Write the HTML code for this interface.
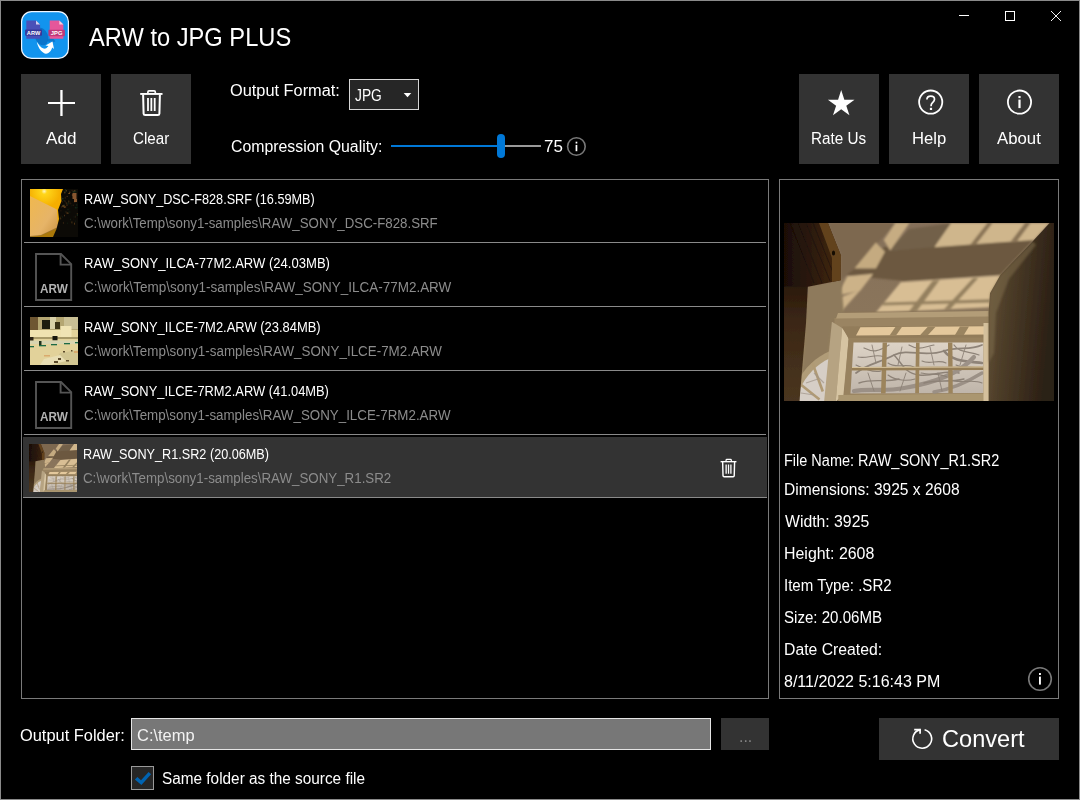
<!DOCTYPE html>
<html lang="en">
<head>
<meta charset="utf-8">
<title>ARW to JPG PLUS</title>
<style>
*{box-sizing:border-box;margin:0;padding:0}
html,body{width:1080px;height:800px;overflow:hidden;background:#000}
body{position:relative;font-family:"Liberation Sans",sans-serif;color:#fff}
#win{position:absolute;left:0;top:0;width:1080px;height:800px;border:1px solid #8a8a8a;background:#000}
.a{position:absolute}
.t{position:absolute;white-space:nowrap;line-height:1;color:#fff;transform-origin:0 0}
.btn{position:absolute;background:#333;width:80px;height:90px;top:74px}
.sep{position:absolute;left:24px;width:742px;height:1px;background:#8a8a8a}
svg{position:absolute;overflow:visible}
</style>
</head>
<body>
<div id="win"></div>

<svg width="0" height="0" style="left:0;top:0">
 <defs>
  <g id="trash" fill="none" stroke="#fff">
   <rect x="2.2" y="5" width="22.3" height="1.9" fill="#fff" stroke="none"/>
   <path d="M9.9 5 V3.9 Q9.9 2.8 11 2.8 H16.2 Q17.3 2.8 17.3 3.9 V5" stroke-width="1.7"/>
   <path d="M5.1 6.5 L5.6 25.6 Q5.7 27.1 7.2 27.1 H19.8 Q21.3 27.1 21.4 25.6 L21.9 6.5" stroke-width="2"/>
   <path d="M10 10 V23.1 M13.35 10 V23.1 M16.7 10 V23.1" stroke-width="1.8"/>
  </g>
  <g id="fileico">
   <path d="M1 1 H26 L36.2 11.2 V47 H1 Z" fill="none" stroke="#555" stroke-width="1.9"/>
   <path d="M25.6 1 V11.6 H36.2" fill="none" stroke="#555" stroke-width="1.9"/>
  </g>
  <linearGradient id="gCeil" x1="0" y1="0" x2="0" y2="1"><stop offset="0" stop-color="#85705a"/><stop offset="1" stop-color="#8f7a5c"/></linearGradient>
  <linearGradient id="gWallR" x1="0" y1="0" x2="1" y2="0.25"><stop offset="0" stop-color="#66543a"/><stop offset="0.35" stop-color="#4e3e29"/><stop offset="1" stop-color="#2c2015"/></linearGradient>
  <linearGradient id="gBeam" x1="0" y1="0" x2="1" y2="0"><stop offset="0" stop-color="#1a0e06"/><stop offset="0.55" stop-color="#2e1b0c"/><stop offset="1" stop-color="#452a13"/></linearGradient>
  <linearGradient id="gCol" x1="0" y1="0" x2="0" y2="1"><stop offset="0" stop-color="#2a190c"/><stop offset="0.3" stop-color="#3a2614"/><stop offset="1" stop-color="#4a3620"/></linearGradient>
  <linearGradient id="gGlass" x1="0" y1="0" x2="0" y2="1"><stop offset="0" stop-color="#ddd3c6"/><stop offset="1" stop-color="#bfb5aa"/></linearGradient>
  <linearGradient id="gCove" x1="0" y1="0" x2="0" y2="1"><stop offset="0" stop-color="#8a7456"/><stop offset="0.6" stop-color="#a38d6b"/><stop offset="1" stop-color="#8c7758"/></linearGradient>
  <filter id="fb" x="-5%" y="-5%" width="110%" height="110%"><feGaussianBlur stdDeviation="0.9"/></filter>
  <filter id="fb2" x="-5%" y="-5%" width="110%" height="110%"><feGaussianBlur stdDeviation="0.5"/></filter>
  <clipPath id="cpPhoto"><rect x="0" y="0" width="270" height="178"/></clipPath>
  <g id="photo" clip-path="url(#cpPhoto)">
   <rect x="0" y="0" width="270" height="178" fill="url(#gCeil)"/>
   <!-- darker mid shadow on ceiling -->
   <g filter="url(#fb)">
    <polygon points="100,24 250,16 216,52 120,58 60,52 70,46" fill="#6c5840"/>
    <polygon points="125,6 168,0 150,24 104,28" fill="#72604a"/>
    <polygon points="44,0 112,0 70,46 57,57 57,32" fill="#7d6850"/>
    <!-- light patches -->
    <polygon points="111.4,0 125.6,0 106.2,27.4 99.7,17" fill="#c6ac82"/>
    <polygon points="91.9,19.6 101,28.7 91.9,45.6 70.5,45.6" fill="#c4aa80"/>
    <polygon points="63.4,53.3 89.3,50.7 76.4,67.6 53,72.8" fill="#ccb288"/>
    <polygon points="53.3,75.4 77,66.5 56,90 49.8,92" fill="#cdb389"/>
    <polygon points="167.1,0 265.6,0 250.1,17 213.8,19.6 150.3,24.2" fill="#cfb68c"/>
    <polygon points="203.4,0 208.5,0 192,21.5 186,22" fill="#8a7456"/>
    <polygon points="241,0 246.6,0 233.2,18 226.7,18.6" fill="#8a7456"/>
    <!-- lower light grid -->
    <polygon points="116.7,59.2 216.7,52.6 206,84.2 91.7,89.7" fill="#d8be94"/>
    <polygon points="148.6,57.8 155.6,57.2 133.3,87.5 125,88.3" fill="#94805e"/>
    <polygon points="188.9,55.3 194.4,55 166.7,85.8 159.7,86.4" fill="#94805e"/>
    <polygon points="100,79.4 206,76.2 206,79.4 98,82.6" fill="#94805e"/>
   </g>
   <!-- lower wall / cove area -->
   <rect x="15" y="89" width="192" height="90" fill="url(#gCove)" filter="url(#fb)"/>
   <polygon points="24,63.7 57,57.2 60,90 47.9,98.7 40,178 15.5,178 22,100" fill="#8e7a5c" filter="url(#fb)"/>
   <!-- arc window -->
   <g filter="url(#fb2)">
    <path d="M13,160 C20,145 32,134 46,128 L42,178 L13,178 Z" fill="#b09c78"/>
    <path d="M15.5,167 C22,152 33,141 45.5,135.5 L41.5,178 L15.5,178 Z" fill="#d6cec6"/>
    <path d="M28.4,140 L38.8,168.5" stroke="#b09a74" stroke-width="2.6"/>
    <path d="M15.4,160.5 L35.5,176.5" stroke="#b09a74" stroke-width="2.6"/>
    <path d="M17,170 L30,172 M22,160 L34,156 M30,150 L40,160" stroke="#a09488" stroke-width="1.2" opacity="0.7"/>
   </g>
   <!-- window -->
   <g filter="url(#fb2)">
    <polygon points="50.4,95 204.7,93 204.7,103 50.4,104" fill="#9a8462"/>
    <polygon points="54,90 204.7,88 204.7,93.5 52,95.5" fill="#b39d78"/>
    <polygon points="47.9,98.7 58.2,105.1 51.7,178.8 40.1,178.8" fill="#b6a382"/>
    <polygon points="58.2,105.1 64.7,114.9 59.5,171.3 51.7,178.8" fill="#d6c4a2"/>
    <polygon points="58.2,103.5 204.7,102.5 204.7,116 64.7,116" fill="#927c5a"/>
    <polygon points="76.4,104.2 201.5,103.2 201.5,111.6 72,112.6" fill="#e4c89c"/>
    <polygon points="111.4,104 117.9,104 112,112.4 105.5,112.4" fill="#9a8460"/>
    <polygon points="143.8,103.8 151.6,103.8 143.8,112.2 136,112.2" fill="#9a8460"/>
    <polygon points="176,103.5 185,103.5 179.8,112 171,112" fill="#9a8460"/>
    <polygon points="64.7,114.9 204.7,114.4 204.7,178 59.5,178" fill="#98825f"/>
    <polygon points="69.5,119.6 199.5,119.6 199.5,170 66.5,170.6" fill="url(#gGlass)"/>
   </g>
   <!-- branches -->
   <g fill="none" stroke="#877c71" stroke-linecap="round" filter="url(#fb2)" opacity="0.9">
    <path d="M72,150 C85,140 95,140 110,132 C125,125 140,135 160,128 C175,123 185,128 198,122" stroke-width="1.8"/>
    <path d="M110,132 C118,140 120,150 135,152 C150,154 160,146 175,150" stroke-width="1.5"/>
    <path d="M160,128 C168,138 180,138 198,140" stroke-width="2.6"/>
    <path d="M190,134 C176,150 150,160 120,165 C100,169 85,165 70,168" stroke-width="4.2" stroke="#978c82"/>
    <path d="M198,150 C185,158 170,166 150,169" stroke-width="3.4" stroke="#978c82"/>
    <path d="M80,125 C90,130 95,128 105,122 M125,122 C135,128 140,124 150,122 M170,122 C175,130 185,128 195,132" stroke-width="1.2"/>
    <path d="M75,160 C90,155 100,160 115,156 M140,160 C155,156 165,160 180,156" stroke-width="1.4"/>
    <path d="M74,134 C84,136 92,130 100,134 M104,140 C112,146 122,140 130,144 M138,138 C146,142 154,136 162,140 M172,142 C180,146 188,142 197,146" stroke-width="1.1"/>
    <path d="M72,142 C80,146 90,150 97,148 M104,152 C112,158 124,158 131,156 M137,150 C146,152 156,150 163,154 M170,158 C180,160 190,156 198,160" stroke-width="1.1"/>
    <path d="M88,122 L92,140 M118,124 L114,142 M146,124 L150,142 M182,122 L176,142 M84,150 L90,168 M122,150 L116,168 M154,150 L158,168" stroke-width="0.9"/>
   </g>
   <!-- muntins & frame -->
   <g filter="url(#fb2)">
    <polygon points="98.6,119.6 103,119.6 101.6,170.4 97,170.4" fill="#9c845c"/>
    <polygon points="132,119.6 135.6,119.6 135,170.3 131.2,170.3" fill="#9c845c"/>
    <polygon points="164,119.6 168.4,119.6 168.8,170.2 164.4,170.2" fill="#9c845c"/>
    <polygon points="68,144 199.5,143.4 199.5,147 67.6,147.6" fill="#967e56"/>
    <polygon points="68,144 199.5,143.4 199.5,144.4 68,145" fill="#d8c49c"/>
    <polygon points="54.3,171.9 204.7,170.4 204.7,178.8 54.3,178.8" fill="#aa9670"/>
    <polygon points="199.5,100 204.7,100 204.7,178 199.5,178" fill="#d4c09c"/>
   </g>
   <!-- right wall -->
   <polygon points="265.6,0 270,0 270,178 204.7,178 204.7,89 206,70.2 216.4,52 248.8,18.3" fill="url(#gWallR)" filter="url(#fb2)"/>
   <polygon points="216.4,52 248.8,18.3 252,22 225,56 212,90 210,130 204.7,140 204.7,89 206,70.2" fill="#7e6c4c" opacity="0.55" filter="url(#fb)"/>
   <!-- left column and beam -->
   <g filter="url(#fb2)">
    <polygon points="0,60 24,60 22,100 15.5,178 0,178" fill="url(#gCol)"/>
    <polygon points="0,0 44,0 57,32.6 56.7,57.2 24,63.7 0,63.7" fill="url(#gBeam)"/>
    <path d="M6,0 L30,60 M14,0 L38,60 M22,0 L46,58 M29,0 L50,52" stroke="#120904" stroke-width="0.8" opacity="0.5" fill="none"/>
    <polygon points="35,0 44,0 57,32.6 56.7,57.2 48,59 48,35" fill="#62431f"/>
    <ellipse cx="49.5" cy="30" rx="1.6" ry="2.6" fill="#140a04"/>
   </g>
  </g>

 </defs>
</svg>


<!-- window controls -->
<svg style="left:0;top:0" width="1080" height="40" viewBox="0 0 1080 40">
 <rect x="959" y="15" width="10" height="1" fill="#fff"/>
 <rect x="1005.5" y="11.5" width="9" height="9" fill="none" stroke="#fff" stroke-width="1"/>
 <path d="M1051 11 L1061 21 M1061 11 L1051 21" stroke="#fff" stroke-width="0.95" fill="none"/>
</svg>

<svg id="appicon" style="left:21px;top:11px" width="48" height="48" viewBox="0 0 48 48">
 <rect x="0.6" y="0.6" width="46.8" height="46.8" rx="10" ry="10" fill="#1294ee" stroke="#f0f6ff" stroke-width="1.2"/>
 <ellipse cx="20.5" cy="25.5" rx="6.5" ry="9" fill="#0a6fc4" opacity="0.85" transform="rotate(-20 20.5 25.5)"/>
 <path d="M27 30 Q31 27 33 31" stroke="#0a6fc4" stroke-width="3" fill="none" opacity="0.8"/>
 <!-- arw file -->
 <path d="M5.3 9.4 H15 L19.1 13.5 V27.8 H5.3 Z" fill="#4a50b8"/>
 <path d="M15 9.4 L19.1 13.5 H15 Z" fill="#d6d0f0"/>
 <rect x="4.1" y="18.4" width="16.9" height="6.4" rx="0.8" fill="#37379a"/>
 <text x="12.55" y="23.5" font-family="Liberation Sans, sans-serif" font-weight="700" font-size="5.4" fill="#fff" text-anchor="middle" textLength="13.4" lengthAdjust="spacingAndGlyphs">ARW</text>
 <!-- jpg file -->
 <path d="M28.7 9.4 H38.3 L42.4 13.5 V27.8 H28.7 Z" fill="#e6569a"/>
 <path d="M38.3 9.4 L42.4 13.5 H38.3 Z" fill="#f6d0e2"/>
 <rect x="27.4" y="18.8" width="16.5" height="6.4" rx="0.8" fill="#c0387a"/>
 <text x="35.65" y="23.9" font-family="Liberation Sans, sans-serif" font-weight="700" font-size="5.4" fill="#fff" text-anchor="middle" textLength="11.6" lengthAdjust="spacingAndGlyphs">JPG</text>
 <!-- arrow -->
 <path d="M15.8 30.8 C17 38 22.5 43 25 42.8 C28.5 42.5 30.5 39 31.2 36.5 L33 38 L31.5 30.5 L24.5 34.5 L27.5 35 C26 37 24.5 38 22.5 37.5 C19.5 36.8 17.5 33.5 15.8 30.8 Z" fill="#fff"/>
</svg>


<!-- toolbar buttons -->
<div class="btn" style="left:21px"></div>
<div class="btn" style="left:111px"></div>
<div class="btn" style="left:799px"></div>
<div class="btn" style="left:889px"></div>
<div class="btn" style="left:979px"></div>

<svg style="left:0;top:60px" width="1080" height="110" viewBox="0 60 1080 110">
 <!-- plus -->
 <rect x="48" y="102" width="27" height="2" fill="#fff"/>
 <rect x="60.3" y="90" width="2.3" height="26" fill="#fff"/>
 <!-- trash -->
 <use href="#trash" x="138" y="88"/>
 <!-- star -->
 <polygon fill="#fff" points="841.2,90 844.34,99.67 854.51,99.67 846.29,105.65 849.43,115.33 841.2,109.35 832.97,115.33 836.11,105.65 827.89,99.67 838.06,99.67"/>
 <!-- help -->
 <circle cx="930.7" cy="102.1" r="11.6" fill="none" stroke="#fff" stroke-width="1.8"/>
 <path d="M926.9 99.6 C926.9 97.4 928.6 96.2 930.8 96.2 C933 96.2 934.5 97.5 934.5 99.3 C934.5 101 933.4 101.8 932.3 102.8 C931.4 103.6 931 104.2 931 106.2" fill="none" stroke="#fff" stroke-width="1.7"/>
 <rect x="929.9" y="107.8" width="2.2" height="2.2" fill="#fff"/>
 <!-- about -->
 <circle cx="1019.5" cy="102.1" r="11.6" fill="none" stroke="#fff" stroke-width="1.8"/>
 <rect x="1018.4" y="96" width="2.2" height="2.1" fill="#fff"/>
 <rect x="1018.4" y="99.6" width="2.2" height="8.5" fill="#fff"/>
</svg>

<!-- options -->
<div class="a" style="left:349px;top:79px;width:70px;height:31px;background:#262626;border:1px solid #d6d6d6"></div>
<svg style="left:403px;top:92px" width="10" height="6" viewBox="0 0 10 6"><polygon points="0.7,1 8.3,1 4.5,5.2" fill="#fff"/></svg>
<div class="a" style="left:391px;top:145px;width:110px;height:2px;background:#0078d7"></div>
<div class="a" style="left:501px;top:145px;width:40px;height:2px;background:#999"></div>
<div class="a" style="left:497px;top:134px;width:8px;height:24px;border-radius:4px;background:#0078d7"></div>
<svg style="left:564px;top:134px" width="26" height="26" viewBox="564 134 26 26">
 <circle cx="576.4" cy="146.5" r="8.8" fill="none" stroke="#787878" stroke-width="1.6"/>
 <rect x="575.6" y="141.7" width="1.7" height="1.8" fill="#fff"/>
 <rect x="575.6" y="144.9" width="1.7" height="6.3" fill="#fff"/>
</svg>

<!-- list -->
<div class="a" style="left:21px;top:179px;width:748px;height:520px;border:1px solid #7a7a7a"></div>
<div class="sep" style="top:242px"></div>
<div class="sep" style="top:306px"></div>
<div class="sep" style="top:370px"></div>
<div class="sep" style="top:434px"></div>
<div class="a" style="left:23px;top:437px;width:744px;height:60px;background:#333"></div>
<div class="a" style="left:23px;top:497px;width:744px;height:1px;background:#8a8a8a"></div>

<!-- thumb 1 -->
<svg style="left:30px;top:189px" width="48" height="48" viewBox="0 0 48 48">
 <defs>
  <radialGradient id="gSun" cx="14.2" cy="2.3" r="16" gradientUnits="userSpaceOnUse"><stop offset="0" stop-color="#fff6c0"/><stop offset="0.18" stop-color="#ffd61a"/><stop offset="1" stop-color="#f5ae00"/></radialGradient>
  <linearGradient id="gWedge" x1="0" y1="0" x2="1" y2="1"><stop offset="0" stop-color="#f0b84e"/><stop offset="0.6" stop-color="#e6b468"/><stop offset="1" stop-color="#c89040"/></linearGradient>
  <clipPath id="cpT"><rect x="0" y="0" width="48" height="48"/></clipPath>
 </defs>
 <g clip-path="url(#cpT)">
  <rect width="48" height="48" fill="url(#gSun)"/>
  <polygon points="0,7 27,20.5 28,39 11,46.5 0,48" fill="url(#gWedge)"/>
  <polygon points="0,47 11,46 28,38 28,48 0,48" fill="#6a4a10" opacity="0.55"/>
  <polygon points="33,0 48,0 48,48 23,48 26.5,40 29,30 28,21 31.5,12 31,5" fill="#0c0a06"/>
  <g><rect x="33.5" y="11.0" width="1" height="1" fill="#14301c" opacity="0.91"/><rect x="31.7" y="12.4" width="1" height="1" fill="#8a5a22" opacity="0.54"/><rect x="33.9" y="2.4" width="2" height="1" fill="#14301c" opacity="0.91"/><rect x="40.3" y="32.2" width="1" height="2" fill="#0e1a10" opacity="0.26"/><rect x="45.0" y="1.6" width="1.5" height="2" fill="#14301c" opacity="0.57"/><rect x="39.3" y="19.4" width="1" height="1" fill="#0e1a10" opacity="0.79"/><rect x="39.7" y="12.7" width="1" height="1" fill="#2a1a0c" opacity="0.81"/><rect x="36.3" y="23.1" width="1.5" height="2" fill="#2a1a0c" opacity="0.79"/><rect x="34.8" y="12.3" width="1" height="1" fill="#6a4a20" opacity="0.54"/><rect x="44.9" y="17.9" width="2" height="1.5" fill="#14301c" opacity="0.80"/><rect x="38.4" y="4.0" width="1.5" height="1" fill="#8a5a22" opacity="0.97"/><rect x="42.3" y="1.3" width="1.5" height="1.5" fill="#2a1a0c" opacity="0.85"/><rect x="37.5" y="19.7" width="1" height="1.5" fill="#14301c" opacity="0.74"/><rect x="42.7" y="2.1" width="2" height="1.5" fill="#243a24" opacity="0.86"/><rect x="39.4" y="0.8" width="1" height="1" fill="#0e1a10" opacity="0.75"/><rect x="30.8" y="26.1" width="1" height="2" fill="#2a1a0c" opacity="0.35"/><rect x="39.0" y="2.7" width="1.5" height="1" fill="#6a4a20" opacity="0.91"/><rect x="46.7" y="24.0" width="2" height="1" fill="#5a3a1c" opacity="0.58"/><rect x="41.9" y="5.1" width="1" height="2" fill="#5a3a1c" opacity="0.92"/><rect x="31.5" y="8.9" width="2" height="1.5" fill="#243a24" opacity="0.80"/><rect x="41.4" y="32.4" width="1" height="2" fill="#8a5a22" opacity="0.47"/><rect x="37.1" y="13.5" width="2" height="2" fill="#14301c" opacity="0.53"/><rect x="36.9" y="33.5" width="1" height="1.5" fill="#14301c" opacity="0.40"/><rect x="35.1" y="0.0" width="1" height="1.5" fill="#14301c" opacity="0.81"/><rect x="39.9" y="29.7" width="1" height="1.5" fill="#243a24" opacity="0.49"/><rect x="32.1" y="16.1" width="2" height="2" fill="#6a4a20" opacity="0.74"/><rect x="34.0" y="2.9" width="1.5" height="1.5" fill="#5a3a1c" opacity="0.74"/><rect x="33.4" y="17.6" width="1.5" height="1" fill="#3a2410" opacity="0.85"/><rect x="34.0" y="25.8" width="1" height="1.5" fill="#5a3a1c" opacity="0.76"/><rect x="34.5" y="12.1" width="1.5" height="1" fill="#0e1a10" opacity="0.81"/><rect x="43.6" y="27.4" width="1" height="1" fill="#243a24" opacity="0.38"/><rect x="46.8" y="24.9" width="1.5" height="2" fill="#243a24" opacity="0.63"/><rect x="45.9" y="15.2" width="1.5" height="1.5" fill="#14301c" opacity="0.54"/><rect x="34.7" y="7.7" width="1" height="2" fill="#3a2410" opacity="0.81"/><rect x="41.1" y="16.3" width="1" height="1" fill="#0e1a10" opacity="0.95"/><rect x="33.1" y="16.3" width="1.5" height="1" fill="#8a5a22" opacity="0.90"/><rect x="42.7" y="15.7" width="1" height="1" fill="#5a3a1c" opacity="0.59"/><rect x="41.2" y="0.9" width="2" height="1" fill="#2a1a0c" opacity="0.81"/><rect x="34.8" y="22.3" width="1" height="1" fill="#14301c" opacity="0.51"/><rect x="45.9" y="17.9" width="2" height="1" fill="#0e1a10" opacity="0.91"/><rect x="35.8" y="1.0" width="1" height="1.5" fill="#8a5a22" opacity="0.63"/><rect x="29.7" y="28.4" width="1.5" height="2" fill="#8a5a22" opacity="0.42"/><rect x="44.8" y="28.1" width="1" height="1" fill="#3a2410" opacity="0.38"/><rect x="42.9" y="29.7" width="1" height="1" fill="#2a1a0c" opacity="0.29"/><rect x="30.4" y="21.0" width="1" height="1.5" fill="#2a1a0c" opacity="0.84"/><rect x="30.4" y="26.7" width="1" height="1" fill="#3a2410" opacity="0.30"/><rect x="37.9" y="26.3" width="1" height="1" fill="#0e1a10" opacity="0.36"/><rect x="36.7" y="23.6" width="2" height="1" fill="#6a4a20" opacity="0.85"/><rect x="45.0" y="31.4" width="1" height="2" fill="#14301c" opacity="0.28"/><rect x="35.8" y="13.3" width="1" height="2" fill="#6a4a20" opacity="0.54"/><rect x="45.1" y="26.7" width="1" height="1.5" fill="#5a3a1c" opacity="0.29"/><rect x="32.9" y="32.9" width="1" height="2" fill="#5a3a1c" opacity="0.47"/><rect x="44.0" y="33.7" width="1" height="2" fill="#8a5a22" opacity="0.50"/><rect x="34.1" y="11.5" width="1.5" height="1" fill="#3a2410" opacity="0.86"/><rect x="38.3" y="11.5" width="1" height="2" fill="#6a4a20" opacity="0.67"/><rect x="31.0" y="17.4" width="1" height="1" fill="#6a4a20" opacity="0.54"/><rect x="43.9" y="1.3" width="1.5" height="1" fill="#6a4a20" opacity="0.91"/><rect x="39.4" y="13.8" width="2" height="1.5" fill="#3a2410" opacity="0.54"/><rect x="31.9" y="27.2" width="1" height="1.5" fill="#14301c" opacity="0.48"/><rect x="30.1" y="27.3" width="1" height="1" fill="#14301c" opacity="0.32"/><rect x="35.9" y="15.4" width="2" height="1.5" fill="#3a2410" opacity="0.81"/><rect x="33.9" y="17.9" width="1" height="1" fill="#5a3a1c" opacity="0.63"/><rect x="36.5" y="6.9" width="1.5" height="1" fill="#5a3a1c" opacity="0.64"/><rect x="43.9" y="9.2" width="1.5" height="1" fill="#0e1a10" opacity="0.51"/><rect x="34.1" y="17.5" width="2" height="1" fill="#8a5a22" opacity="0.83"/><rect x="38.4" y="22.3" width="2" height="1.5" fill="#0e1a10" opacity="0.84"/><rect x="44.3" y="11.7" width="1" height="2" fill="#3a2410" opacity="0.99"/><rect x="28.9" y="28.5" width="1.5" height="2" fill="#14301c" opacity="0.29"/><rect x="35.4" y="22.6" width="1.5" height="1" fill="#3a2410" opacity="0.85"/><rect x="32.9" y="15.6" width="2" height="1" fill="#243a24" opacity="0.63"/></g>
  <g fill="#a86a3a" opacity="0.8"><rect x="42.5" y="4" width="4" height="6"/><rect x="44" y="10" width="3" height="3"/></g>
 </g>
</svg>
<!-- thumb 3 -->
<svg style="left:30px;top:317px;overflow:hidden" width="48" height="48" viewBox="0 0 48 48">
 <defs><filter id="fT3" x="-10%" y="-10%" width="120%" height="120%"><feGaussianBlur stdDeviation="0.55"/></filter></defs>
 <rect width="48" height="48" fill="#e2d29a"/>
 <g filter="url(#fT3)">
 <rect x="-3" y="-3" width="54" height="54" fill="#e2d29a"/>
 <rect x="0" y="0" width="48" height="13" fill="#b4a672"/>
 <rect x="0" y="0" width="8" height="13" fill="#6e5632"/>
 <rect x="20" y="0" width="6" height="12" fill="#d8d0a8"/>
 <rect x="34" y="0" width="14" height="12" fill="#c9bf94"/>
 <rect x="12" y="3" width="8" height="9" fill="#1c1a10"/>
 <rect x="25" y="5" width="5" height="7" fill="#3a3018"/>
 <rect x="30.5" y="9" width="11" height="12" fill="#f0e4b4"/>
 <rect x="0" y="13" width="31" height="7" fill="#efe2b0"/>
 <rect x="0" y="20" width="48" height="2" fill="#a89a68"/>
 <rect x="22.5" y="19" width="5" height="4.5" fill="#14140c"/>
 <rect x="0" y="20" width="3.5" height="4" fill="#2a2412"/>
 <rect x="0" y="23.5" width="48" height="3.5" fill="#d8d4b0"/>
 <rect x="9" y="24" width="2.5" height="5" fill="#24321e"/>
 <g fill="#1a6a44"><rect x="9" y="28" width="7" height="1.3"/><rect x="21" y="27" width="6" height="1.3"/><rect x="34" y="26" width="6" height="1.3"/><rect x="0" y="29" width="4" height="1.3"/><rect x="45" y="25" width="3" height="1.3"/></g>
 <polygon points="30,36 48,33 48,48 22,48" fill="#d2c692"/>
 <polygon points="14,42 30,38 36,44 20,48 10,48" fill="#e8deb4"/>
 <g fill="#5a4a2a"><rect x="28" y="41" width="3" height="2"/><rect x="24" y="44" width="4" height="2"/><rect x="36" y="43" width="3" height="1.5"/><rect x="33" y="34" width="2" height="1.5"/><rect x="41" y="33" width="1.5" height="1.5"/></g>
 <g fill="#d89a5a" opacity="0.7"><rect x="14" y="38" width="6" height="1.5"/><rect x="44" y="34" width="4" height="2"/></g>
 </g>
</svg>
<!-- thumb 5 -->
<svg style="left:29px;top:444px;overflow:hidden" width="48" height="48" viewBox="0 0 178 178"><use href="#photo"/></svg>


<!-- file icons -->
<svg style="left:30px;top:250px" width="48" height="54" viewBox="30 250 48 54"><use href="#fileico" x="35" y="253"/></svg>
<svg style="left:30px;top:378px" width="48" height="54" viewBox="30 378 48 54"><use href="#fileico" x="35" y="381"/></svg>
<!-- small trash -->
<svg style="left:715px;top:455px" width="26" height="26" viewBox="715 455 26 26"><use href="#trash" transform="translate(719.04 457.45) scale(0.71)"/></svg>

<!-- preview panel -->
<div class="a" style="left:779px;top:179px;width:280px;height:520px;border:1px solid #7a7a7a"></div>
<svg id="preview" style="left:784px;top:223px" width="270" height="178" viewBox="0 0 270 178"><use href="#photo"/></svg>

<svg style="left:1025px;top:664px" width="30" height="30" viewBox="1025 664 30 30">
 <circle cx="1040" cy="679" r="11.3" fill="none" stroke="#787878" stroke-width="1.6"/>
 <rect x="1039" y="673" width="1.9" height="2" fill="#fff"/>
 <rect x="1039" y="676.6" width="1.9" height="8" fill="#fff"/>
</svg>

<!-- bottom -->
<div class="a" style="left:131px;top:718px;width:580px;height:32px;background:#777;border:1px solid #e4e4e4"></div>
<div class="a" style="left:721px;top:718px;width:48px;height:32px;background:#333"></div>
<div class="a" style="left:879px;top:718px;width:180px;height:42px;background:#333"></div>
<svg style="left:908px;top:725px" width="30" height="30" viewBox="908 725 30 30">
 <path d="M924.6 729.7 A9.4 9.4 0 1 1 920.3 729.6" fill="none" stroke="#fff" stroke-width="1.6"/>
 <path d="M914.2 729.6 H920.1 V733.8" fill="none" stroke="#fff" stroke-width="1.7" stroke-linejoin="miter"/>
</svg>
<div class="a" style="left:131px;top:766px;width:23px;height:24px;background:#262626;border:1px solid #9a9a9a"></div>
<svg style="left:131px;top:766px" width="23" height="24" viewBox="131 766 23 24"><polygon fill="#0063b1" points="134.9,779.4 137.4,777.1 141,780.2 148.6,772 151.1,774.3 141.4,785.1"/></svg>

<div class="t" id="title" style="left:89px;top:24px;font-size:26.2px;transform:scaleX(0.9041)">ARW to JPG PLUS</div>
<div class="t" id="b_add" style="left:46px;top:131px;font-size:16px;transform:scaleX(1.0674)">Add</div>
<div class="t" id="b_clear" style="left:133px;top:131px;font-size:16px;transform:scaleX(0.9485)">Clear</div>
<div class="t" id="b_rate" style="left:811px;top:131px;font-size:16px;transform:scaleX(0.9530)">Rate Us</div>
<div class="t" id="b_help" style="left:912px;top:131px;font-size:16px;transform:scaleX(1.0386)">Help</div>
<div class="t" id="b_about" style="left:997px;top:131px;font-size:16px;transform:scaleX(1.0471)">About</div>
<div class="t" id="l_of" style="left:230px;top:83px;font-size:16px;transform:scaleX(1.0210)">Output Format:</div>
<div class="t" id="l_jpg" style="left:355px;top:88px;font-size:16px;transform:scaleX(0.8607)">JPG</div>
<div class="t" id="l_cq" style="left:231px;top:139px;font-size:16px;transform:scaleX(0.9901)">Compression Quality:</div>
<div class="t" id="l_75" style="left:544px;top:139px;font-size:16px;transform:scaleX(1.0603)">75</div>
<div class="t" id="t1" style="left:84px;top:192px;font-size:14px;transform:scaleX(0.9063)">RAW_SONY_DSC-F828.SRF (16.59MB)</div>
<div class="t" id="p1" style="left:84px;top:216px;font-size:14px;transform:scaleX(0.9485);color:#8c8c8c">C:\work\Temp\sony1-samples\RAW_SONY_DSC-F828.SRF</div>
<div class="t" id="t2" style="left:84px;top:256px;font-size:14px;transform:scaleX(0.9325)">RAW_SONY_ILCA-77M2.ARW (24.03MB)</div>
<div class="t" id="p2" style="left:84px;top:280px;font-size:14px;transform:scaleX(0.9615);color:#8c8c8c">C:\work\Temp\sony1-samples\RAW_SONY_ILCA-77M2.ARW</div>
<div class="t" id="t3" style="left:84px;top:320px;font-size:14px;transform:scaleX(0.9247)">RAW_SONY_ILCE-7M2.ARW (23.84MB)</div>
<div class="t" id="p3" style="left:84px;top:344px;font-size:14px;transform:scaleX(0.9564);color:#8c8c8c">C:\work\Temp\sony1-samples\RAW_SONY_ILCE-7M2.ARW</div>
<div class="t" id="t4" style="left:84px;top:384px;font-size:14px;transform:scaleX(0.9205)">RAW_SONY_ILCE-7RM2.ARW (41.04MB)</div>
<div class="t" id="p4" style="left:84px;top:408px;font-size:14px;transform:scaleX(0.9536);color:#8c8c8c">C:\work\Temp\sony1-samples\RAW_SONY_ILCE-7RM2.ARW</div>
<div class="t" id="t5" style="left:83px;top:447px;font-size:14px;transform:scaleX(0.9046)">RAW_SONY_R1.SR2 (20.06MB)</div>
<div class="t" id="p5" style="left:83px;top:471px;font-size:14px;transform:scaleX(0.9517);color:#8c8c8c">C:\work\Temp\sony1-samples\RAW_SONY_R1.SR2</div>
<div class="t" id="i1" style="left:784px;top:453px;font-size:16px;transform:scaleX(0.9056)">File Name: RAW_SONY_R1.SR2</div>
<div class="t" id="i2" style="left:784px;top:482px;font-size:16px;transform:scaleX(0.9722)">Dimensions: 3925 x 2608</div>
<div class="t" id="i3" style="left:785px;top:514px;font-size:16px;transform:scaleX(0.9861)">Width: 3925</div>
<div class="t" id="i4" style="left:784px;top:546px;font-size:16px;transform:scaleX(0.9952)">Height: 2608</div>
<div class="t" id="i5" style="left:784px;top:578px;font-size:16px;transform:scaleX(0.9405)">Item Type: .SR2</div>
<div class="t" id="i6" style="left:784px;top:610px;font-size:16px;transform:scaleX(0.9422)">Size: 20.06MB</div>
<div class="t" id="i7" style="left:784px;top:642px;font-size:16px;transform:scaleX(0.9846)">Date Created:</div>
<div class="t" id="i8" style="left:784px;top:674px;font-size:16px;transform:scaleX(1.0001)">8/11/2022 5:16:43 PM</div>
<div class="t" id="o_lbl" style="left:20px;top:728px;font-size:16px;transform:scaleX(1.0248)">Output Folder:</div>
<div class="t" id="o_val" style="left:137px;top:728px;font-size:16px;transform:scaleX(1.0295);color:#f2f2f2">C:\temp</div>
<div class="t" id="o_dots" style="left:739px;top:729px;font-size:16px;transform:scaleX(0.9917);color:#858585">...</div>
<div class="t" id="convert" style="left:942px;top:727px;font-size:24px;transform:scaleX(0.9825)">Convert</div>
<div class="t" id="same" style="left:162px;top:771px;font-size:16px;transform:scaleX(0.9592)">Same folder as the source file</div>
<div class="t" id="arw2" style="left:40px;top:283px;font-size:12.3px;transform:scaleX(0.9547);color:#b2b2b2;font-weight:700">ARW</div>
<div class="t" id="arw4" style="left:40px;top:411px;font-size:12.3px;transform:scaleX(0.9547);color:#b2b2b2;font-weight:700">ARW</div>
</body>
</html>
